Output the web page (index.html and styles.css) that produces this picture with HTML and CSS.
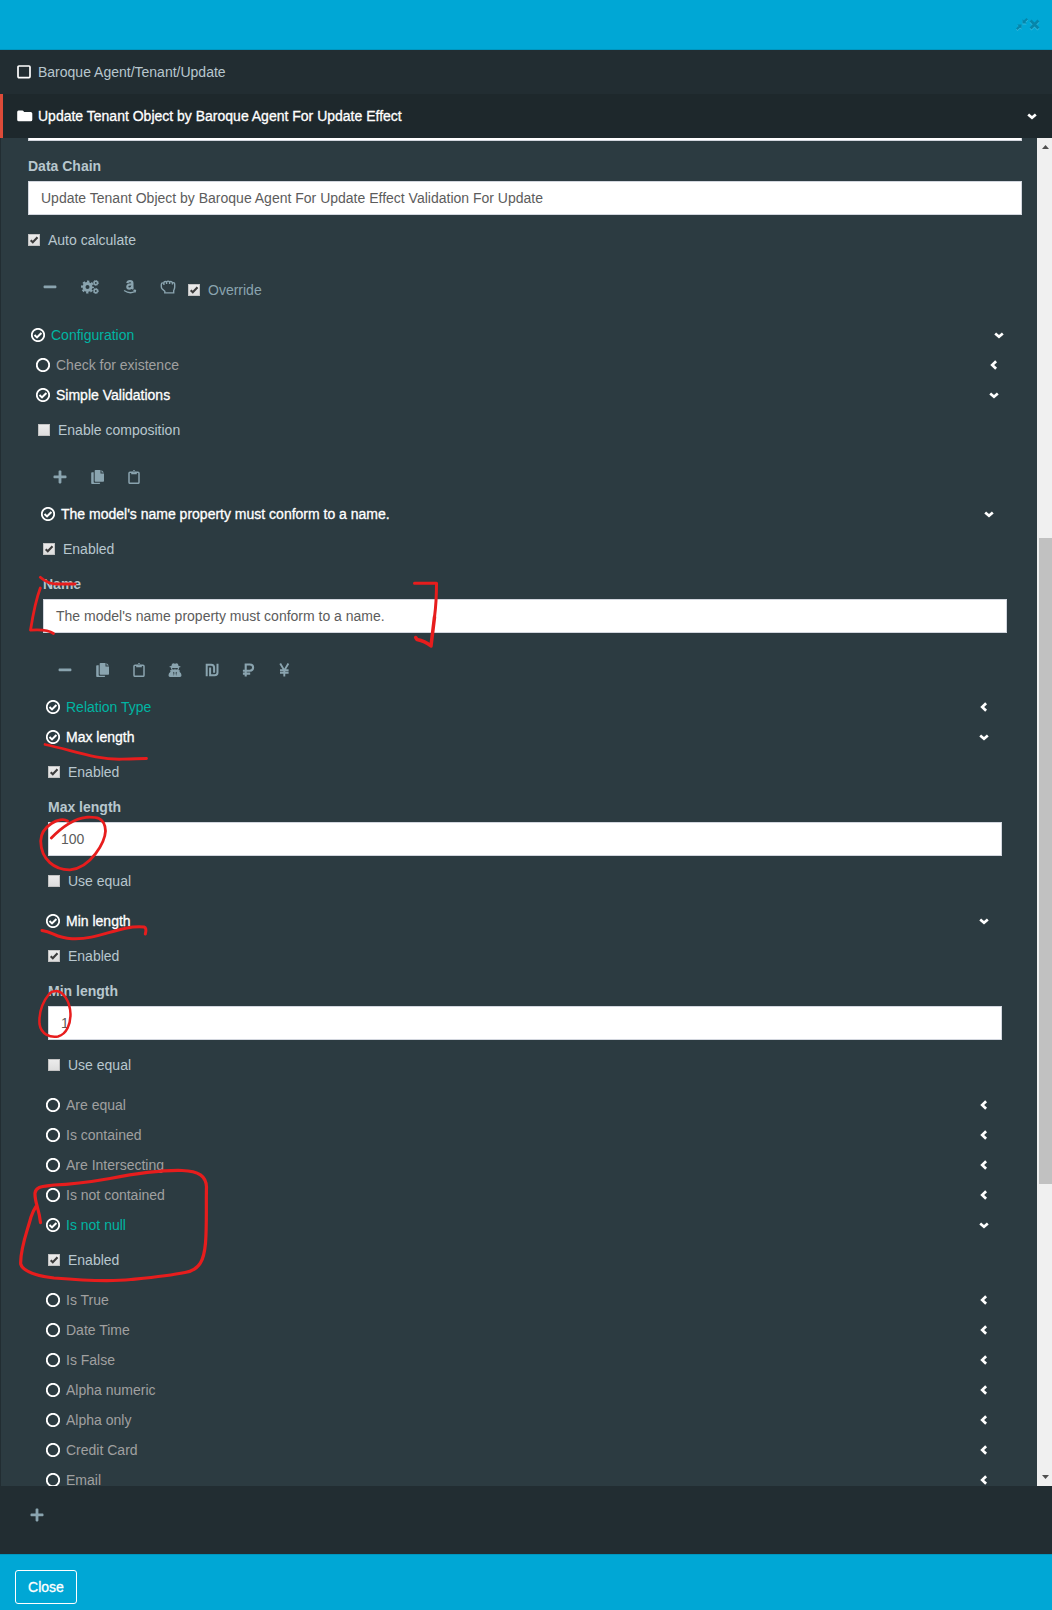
FILE: index.html
```html
<!DOCTYPE html>
<html lang="en">
<head>
<meta charset="utf-8">
<title>Update Tenant Object</title>
<link rel="stylesheet" href="styles.css">
</head>
<body>
<svg class="sprite" aria-hidden="true">
  <symbol id="on" viewBox="0 0 14 14"><circle cx="7" cy="7" r="6.2" fill="none" stroke="currentColor" stroke-width="1.8"/><path d="M3.500 7.100l2.500 2.300 4.400-4.400" fill="none" stroke="currentColor" stroke-width="2.100"/></symbol>
  <symbol id="off" viewBox="0 0 14 14"><circle cx="7" cy="7" r="6.200" fill="none" stroke="currentColor" stroke-width="1.900"/></symbol>
  <symbol id="down" viewBox="0 0 10 10"><path d="M1.200 3.400L5 6.700l3.800-3.300" fill="none" stroke="currentColor" stroke-width="2.700"/></symbol>
  <symbol id="left" viewBox="0 0 10 10"><path d="M7.100 1.200L3.200 5l3.900 3.800" fill="none" stroke="currentColor" stroke-width="2.700"/></symbol>
  <symbol id="tick" viewBox="0 0 12 12"><path d="M2.700 6.200l2.100 2.100 4.700-5.100" fill="none" stroke="#3c3c3c" stroke-width="2.100"/></symbol>
  <symbol id="minus" viewBox="0 0 14 14"><rect x=".6" y="5.6" width="12.8" height="2.7" rx=".8" fill="currentColor"/></symbol>
  <symbol id="plus" viewBox="0 0 14 14"><path d="M1.3 5.6h4.3V1.3q0-.8.8-.8h1.2q.8 0 .8.8v4.3h4.3q.8 0 .8.8v1.1q0 .8-.8.8H8.4v4.3q0 .8-.8.8H6.4q-.8 0-.8-.8V8.3H1.3q-.8 0-.8-.8V6.4q0-.8.8-.8z" fill="currentColor"/></symbol>
  <symbol id="files" viewBox="0 0 14 14"><path d="M4.500 0h5v3.600H13V11q0 .8-.8.8H4.500q-.8 0-.8-.8V.8Q3.700 0 4.500 0zM10.500 .1L12.900 2.600h-2.400zM1 2.200h1.700V12q0 .8.800.8h5.600v.5q0 .7-.8.700H1q-.8 0-.8-.8V3q0-.8.8-.8z" fill="currentColor"/></symbol>
  <symbol id="clip" viewBox="0 0 14 14"><rect x="2" y="2.300" width="10" height="11" rx="1" fill="none" stroke="currentColor" stroke-width="1.500"/><path d="M4.200 4.300V1.900h1.500Q5.900.1 7 .1t1.300 1.800h1.500v2.400z" fill="currentColor"/><circle cx="7" cy="1.700" r=".6" fill="#2c3b41"/></symbol>
  <symbol id="gears" viewBox="0 0 18 14"><g fill="none" stroke="currentColor"><circle cx="6.500" cy="7" r="3.500" stroke-width="3"/><circle cx="6.500" cy="7" r="5.500" stroke-width="2" stroke-dasharray="2.300 2.020" stroke-dashoffset="1.150"/><circle cx="14.800" cy="2.900" r="1.700" stroke-width="1.500"/><circle cx="14.800" cy="2.900" r="2.600" stroke-width=".9" stroke-dasharray="1.200 .84"/><circle cx="14.800" cy="11" r="1.700" stroke-width="1.500"/><circle cx="14.800" cy="11" r="2.600" stroke-width=".9" stroke-dasharray="1.200 .84"/></g></symbol>
  <symbol id="amazon" viewBox="0 0 14 14"><g fill="none" stroke="currentColor"><path d="M4.300 3.200Q4.600 1.100 7 1.100t2.400 2.100v4q0 1 .9 1.700M9.300 4.400Q4.300 4 4.300 6.700q0 1.900 1.900 1.900 2.200 0 3.100-2.200" stroke-width="2.200"/><path d="M1.100 10.500q5.500 3.800 10.500 1.200M10.400 10.300q2-.4 2.100.1t-.7 2" stroke-width="1.300"/></g></symbol>
  <symbol id="fist" viewBox="0 0 16 14"><path d="M4.800 12.900v-1.600L2.300 9Q1.300 7.900 1.300 6.400V4.500q0-1.600 1.400-1.600.6 0 1.100.4Q3.900 1.500 5.300 1.500q.8 0 1.300.5.500-.9 1.500-.9t1.500.8q.5-.4 1.200-.4 1.200 0 1.600 1.200 2.300-.5 2.300 1.700v2.700q0 1-.4 2l-.6 1.500v2.300zM3.900 3.200v1.800M6.600 2v1.900M9.600 2v1.900M12.400 2.800v1.700" fill="none" stroke="currentColor" stroke-width="1.400"/></symbol>
  <symbol id="spy" viewBox="0 0 14 14"><path d="M4.600.4Q5.400.1 6.200.5q.8.300 1.600 0T9.400.4q.8.300 1.200 2.600 2 .3 2 .8 0 .4-1.600.8.200 1.500-.7 2.500l1.700.3-.5 1.300q2 1 2 3.600Q13.500 14 12 14H2Q.5 14 .5 12.300q0-2.600 2-3.600L2 7.300l1.700-.2Q2.800 6 3 4.600q-1.600-.4-1.600-.8 0-.5 2-.8Q3.800.7 4.600.4z" fill="currentColor"/><path d="M4 5.100h2.500l.5.400.5-.4H10L9.400 6.500H7.700L7 5.900l-.7.600H4.600zM5.100 8.800l1.300.7-.5 3.600zM8.900 8.800l-1.300.7.500 3.600z" fill="#2c3b41"/></symbol>
  <symbol id="ils" viewBox="0 0 14 14"><path d="M1.700 13.200V1.700h4.500q2.900 0 2.900 2.800V9.700M5.100 4.600v7.600h4.500q2.900 0 2.900-2.800V.800" fill="none" stroke="currentColor" stroke-width="2"/></symbol>
  <symbol id="rub" viewBox="0 0 14 14"><path d="M4.700 13.500V1.500h4.200q3.200 0 3.200 3.100T8.900 7.700H1.900M1.900 10.600h7.300" fill="none" stroke="currentColor" stroke-width="2.100"/></symbol>
  <symbol id="yen" viewBox="0 0 14 14"><path d="M3.200.5l4.100 6.900L11.400.5M7.300 6.800v6.600M3 7.200h8.600M3 9.800h8.600" fill="none" stroke="currentColor" stroke-width="1.900"/></symbol>
</svg>

<div class="modal">
  <header class="bar-top">
    <svg class="compress" viewBox="0 0 12 12"><path d="M6.500 5.500V1.300l1.400 1.300L10.500 0 12 1.500 9.400 4.100l1.300 1.400zM5.500 6.500v4.200L4.100 9.400 1.500 12 0 10.500l2.600-2.600-1.300-1.400z" fill="currentColor"/></svg>
    <svg class="times" viewBox="0 0 12 12"><path d="M1.700 1.700l8.600 8.600M10.300 1.700l-8.600 8.600" fill="none" stroke="currentColor" stroke-width="3"/></svg>
  </header>
  <div class="crumb">
    <svg class="lead" viewBox="0 0 16 14"><rect x="1" y="1" width="12" height="11.600" rx="1" fill="none" stroke="currentColor" stroke-width="1.700"/></svg>
    <span>Baroque Agent/Tenant/Update</span>
  </div>
  <div class="crumb active">
    <svg class="lead" viewBox="0 0 16 14"><path d="M1.500 1.500h4q1.200 0 1.500 1.600h6.700q1.600 0 1.600 1.500v6.200q0 1.500-1.600 1.500H1.700Q.2 12.300.2 10.800V3q0-1.500 1.300-1.500z" fill="currentColor"/></svg>
    <span class="strong">Update Tenant Object by Baroque Agent For Update Effect</span>
    <svg class="chev"><use href="#down"/></svg>
  </div>

  <main class="scroller">
    <div class="content">
      <div class="form outer">
        <div class="input cut"></div>
        <div class="label">Data Chain</div>
        <div class="input">Update Tenant Object by Baroque Agent For Update Effect Validation For Update</div>
        <div class="check"><svg class="box"><use href="#tick"/></svg>Auto calculate</div>
        <div class="tools tall">
          <svg class="ic"><use href="#minus"/></svg>
          <svg class="ic wide g1"><use href="#gears"/></svg>
          <svg class="ic g2"><use href="#amazon"/></svg>
          <svg class="ic fist"><use href="#fist"/></svg>
          <span class="check override"><svg class="box"><use href="#tick"/></svg>Override</span>
        </div>
      </div>

      <section class="node root">
        <div class="item teal"><svg class="st"><use href="#on"/></svg><span>Configuration</span><svg class="chev"><use href="#down"/></svg></div>
        <section class="node">
          <div class="item"><svg class="st"><use href="#off"/></svg><span>Check for existence</span><svg class="chev"><use href="#left"/></svg></div>
          <div class="item strong"><svg class="st"><use href="#on"/></svg><span>Simple Validations</span><svg class="chev"><use href="#down"/></svg></div>
          <div class="form">
            <div class="check"><svg class="box"></svg>Enable composition</div>
            <div class="tools">
              <svg class="ic"><use href="#plus"/></svg>
              <svg class="ic f1"><use href="#files"/></svg>
              <svg class="ic f2"><use href="#clip"/></svg>
            </div>
          </div>
          <section class="node">
            <div class="item strong"><svg class="st"><use href="#on"/></svg><span>The model's name property must conform to a name.</span><svg class="chev"><use href="#down"/></svg></div>
            <div class="form">
              <div class="check"><svg class="box"><use href="#tick"/></svg>Enabled</div>
              <div class="label">Name</div>
              <div class="input">The model's name property must conform to a name.</div>
              <div class="tools">
                <svg class="ic"><use href="#minus"/></svg>
                <svg class="ic f1"><use href="#files"/></svg>
                <svg class="ic f2"><use href="#clip"/></svg>
                <svg class="ic f2"><use href="#spy"/></svg>
                <svg class="ic f3"><use href="#ils"/></svg>
                <svg class="ic f2"><use href="#rub"/></svg>
                <svg class="ic f2"><use href="#yen"/></svg>
              </div>
            </div>
            <section class="node">
              <div class="item teal"><svg class="st"><use href="#on"/></svg><span>Relation Type</span><svg class="chev"><use href="#left"/></svg></div>
              <div class="item strong"><svg class="st"><use href="#on"/></svg><span>Max length</span><svg class="chev"><use href="#down"/></svg></div>
              <div class="form">
                <div class="check"><svg class="box"><use href="#tick"/></svg>Enabled</div>
                <div class="label">Max length</div>
                <div class="input">100</div>
                <div class="check"><svg class="box"></svg>Use equal</div>
              </div>
              <div class="item strong"><svg class="st"><use href="#on"/></svg><span>Min length</span><svg class="chev"><use href="#down"/></svg></div>
              <div class="form">
                <div class="check"><svg class="box"><use href="#tick"/></svg>Enabled</div>
                <div class="label">Min length</div>
                <div class="input">1</div>
                <div class="check"><svg class="box"></svg>Use equal</div>
              </div>
              <div class="item"><svg class="st"><use href="#off"/></svg><span>Are equal</span><svg class="chev"><use href="#left"/></svg></div>
              <div class="item"><svg class="st"><use href="#off"/></svg><span>Is contained</span><svg class="chev"><use href="#left"/></svg></div>
              <div class="item"><svg class="st"><use href="#off"/></svg><span>Are Intersecting</span><svg class="chev"><use href="#left"/></svg></div>
              <div class="item"><svg class="st"><use href="#off"/></svg><span>Is not contained</span><svg class="chev"><use href="#left"/></svg></div>
              <div class="item teal"><svg class="st"><use href="#on"/></svg><span>Is not null</span><svg class="chev"><use href="#down"/></svg></div>
              <div class="form">
                <div class="check"><svg class="box"><use href="#tick"/></svg>Enabled</div>
              </div>
              <div class="item"><svg class="st"><use href="#off"/></svg><span>Is True</span><svg class="chev"><use href="#left"/></svg></div>
              <div class="item"><svg class="st"><use href="#off"/></svg><span>Date Time</span><svg class="chev"><use href="#left"/></svg></div>
              <div class="item"><svg class="st"><use href="#off"/></svg><span>Is False</span><svg class="chev"><use href="#left"/></svg></div>
              <div class="item"><svg class="st"><use href="#off"/></svg><span>Alpha numeric</span><svg class="chev"><use href="#left"/></svg></div>
              <div class="item"><svg class="st"><use href="#off"/></svg><span>Alpha only</span><svg class="chev"><use href="#left"/></svg></div>
              <div class="item"><svg class="st"><use href="#off"/></svg><span>Credit Card</span><svg class="chev"><use href="#left"/></svg></div>
              <div class="item"><svg class="st"><use href="#off"/></svg><span>Email</span><svg class="chev"><use href="#left"/></svg></div>
            </section>
          </section>
        </section>
      </section>
    </div>
    <div class="track">
      <svg class="arrow" viewBox="0 0 15 17"><path d="M5 11h7L8.500 7z" fill="#505050"/></svg>
      <div class="thumb"></div>
      <svg class="arrow end" viewBox="0 0 15 17"><path d="M5 6h7l-3.500 4z" fill="#505050"/></svg>
    </div>
  </main>

  <div class="add"><svg class="ic"><use href="#plus"/></svg></div>
  <footer class="bar-bottom"><button class="close">Close</button></footer>

  <svg class="marks" viewBox="0 0 1052 1610">
    <g stroke-width="2.800">
      <path d="M40.300 577.300Q48 584 56 584T75 584"/>
      <path d="M40.300 588Q35 602 30.500 630.200Q47 629 53.500 633.500"/>
      <path d="M414.500 583.300H436.500Q436.500 602 434.500 617" stroke-width="3"/>
      <path d="M434.500 617Q432.500 634 431 646Q425 641 417 639.500L415.700 637.500" stroke-width="3.500"/>
      <path d="M45 744.500C72 750 96 760 122 759.200Q138 758.500 146.500 758.500"/>
      <path d="M67.500 821C60 816 41 826 40.700 841C41 860 55 870 70 869.800C91 868 105 842 105.500 831C105 816 94 817 86 817.300C72 819 60 829 51.300 838"/>
      <path d="M42 930.500C54 932 55 938 72 938.700C100 940 118 925 144 927Q147 928 145.300 934" stroke-width="3"/>
      <path d="M49.500 993.500C40 1005 39 1016 39.500 1024C41 1034 50 1038 58 1036.500C67 1034 70.500 1024 70.500 1014C70 1001 63 991 56 991Q52 991 49.500 993.500" stroke-width="2.500"/>
      <path d="M40.500 1222.700C39 1208 34.500 1202 35 1193C36 1186 43 1186.500 54 1185C74 1184.500 90 1182 110 1178.500C133 1174 160 1170 182 1170.500C199 1171 206 1176 206.500 1187C206 1200 207 1225 205.500 1243C204 1260 200 1270 185 1272.500C168 1276 146 1278 131 1279.500C111 1281.500 78 1280 54 1278C38 1276 23 1272 20.700 1264C20 1249 27 1232 31 1217Q33.500 1210 36 1206.500" stroke-width="3.200"/>
    </g>
  </svg>
</div>
</body>
</html>
```
FILE: styles.css
```css
* { box-sizing: border-box; }

body {
  margin: 0;
  font: 14px/20px "Liberation Sans", Arial, sans-serif;
  color: #b8c7ce;
}

svg { display: block; flex: none; }
.sprite { position: absolute; width: 0; height: 0; }

.modal {
  position: relative;
  display: flex;
  flex-direction: column;
  height: 1610px;
  background: #222d32;
  overflow: hidden;
}
.modal > * { flex: none; }

.bar-top {
  display: flex;
  align-items: center;
  justify-content: flex-end;
  gap: 1px;
  height: 50px;
  padding: 0 12px 1px 0;
  background: #00a7d5;
  border-bottom: 1px solid #0096bf;
  color: #0686aa;
}
.compress, .times { width: 12px; height: 12px; filter: drop-shadow(0 1px 0 #33b9dd); }
.times { width: 11px; height: 11px; }

.crumb {
  display: flex;
  align-items: center;
  height: 44px;
  padding-left: 17px;
}
.crumb .lead { width: 16px; height: 14px; margin-right: 5px; color: #fff; }
.crumb .chev { margin: 0 15px 0 auto; }
.crumb.active {
  padding-left: 14px;
  border-left: 3px solid #dd4b39;
  background: #1e282c;
}
.strong { color: #fff; -webkit-text-stroke: .3px #fff; }

.scroller {
  display: flex;
  height: 1348px;
  border-left: 1px solid #222d32;
  background: #2c3b41;
  overflow: hidden;
}
.content { flex: 1; height: 1348px; overflow: hidden; }

.form { padding: 10px 2px 0; }
.form.outer { padding: 0 15px 0 27px; }

.input {
  height: 34px;
  margin-bottom: 15px;
  padding: 6px 12px;
  background: #fff;
  border: 1px solid #d2d6de;
  color: #5c5c5c;
}
.input.cut { height: 3px; padding: 0; border-top: 0; }

.label { margin-bottom: 5px; font-weight: 700; }

.check {
  display: flex;
  align-items: center;
  height: 20px;
  margin-bottom: 15px;
}
.box {
  width: 12px;
  height: 12px;
  margin-right: 8px;
  background: linear-gradient(#ededed, #dcdcdc);
  box-shadow: inset 0 0 0 1px #c3c3c3;
  border-radius: 1px;
}

.tools { display: flex; align-items: center; height: 44px; padding-left: 15px; color: #8aa4af; }
.tools.tall { height: 55px; padding-bottom: 11px; }
.ic { width: 14px; height: 14px; }
.ic.wide { width: 18px; }
.g1 { margin-left: 24px; }
.g2 { margin-left: 24px; }
.ic.fist { width: 16px; margin-left: 23px; }
.f1 { margin-left: 24px; }
.f2 { margin-left: 22px; }
.f3 { margin-left: 23px; }
.override { margin: 6px 0 0 12px; }

.node { padding: 0 5px; }
.node.root { padding: 0; margin: 0 18px 0 30px; }
.item { display: flex; align-items: center; height: 30px; color: #a0a0a0; }
.item.teal { color: #00b5a3; }
.item.strong { color: #fff; }
.st { width: 14px; height: 14px; margin-right: 6px; color: #fff; }
.chev { width: 10px; height: 10px; margin: 0 15.500px 0 auto; color: #fff; }

.track {
  display: flex;
  flex-direction: column;
  width: 15px;
  background: #f0f0f0;
}
.arrow { width: 15px; height: 17px; }
.arrow.end { margin-top: auto; }
.thumb { height: 646px; margin: 383px 0 0 2px; background: #c1c1c1; }

.add { height: 68px; padding: 22px 0 0 30px; color: #8aa4af; }

.bar-bottom {
  height: 56px;
  padding: 15px;
  background: #00a7d5;
  border-top: 1px solid #0096bf;
}
.close {
  display: block;
  width: 62px;
  height: 34px;
  padding: 0;
  background: transparent;
  border: 1px solid #fff;
  border-radius: 3px;
  color: #fff;
  font: inherit;
  -webkit-text-stroke: .3px #fff;
}

.marks {
  position: absolute;
  left: 0;
  top: 0;
  width: 1052px;
  height: 1610px;
  fill: none;
  stroke: #e71d1d;
  stroke-linecap: round;
  stroke-linejoin: round;
  pointer-events: none;
}
```
